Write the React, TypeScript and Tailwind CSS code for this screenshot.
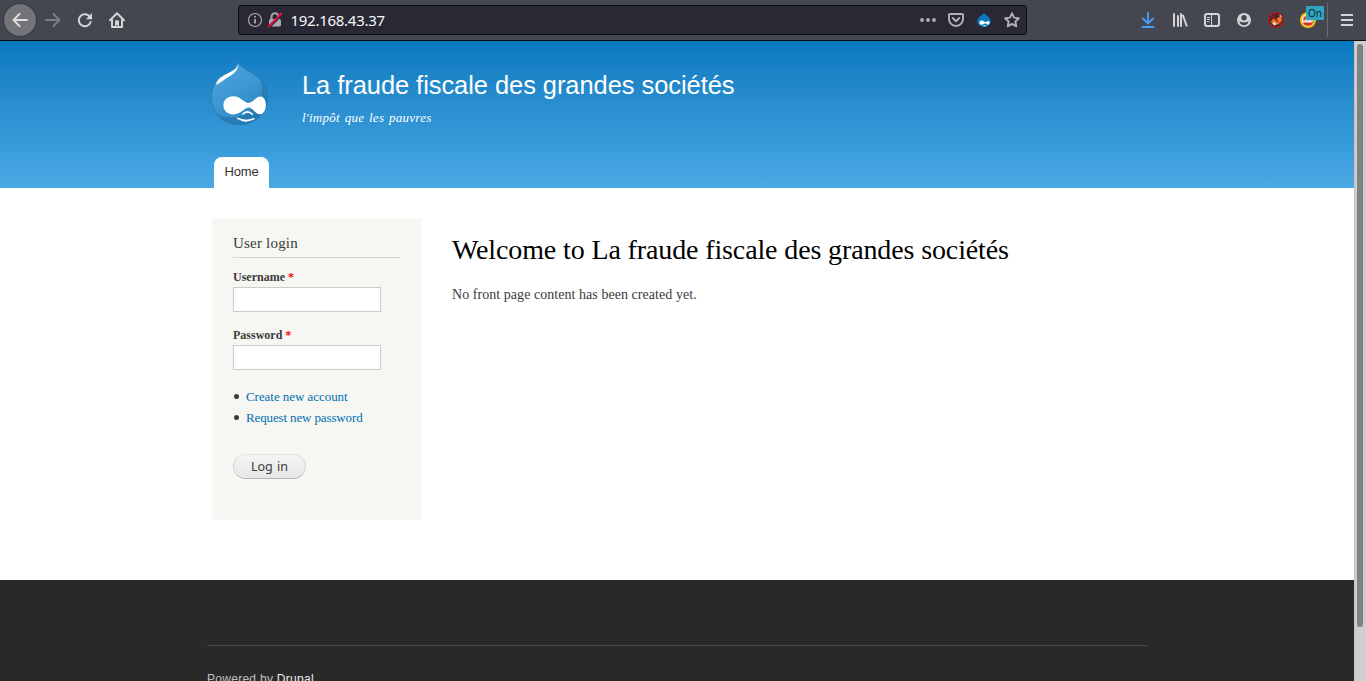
import React from 'react';

const Icon = ({ children, className = 'h-4 w-4' }: { children: React.ReactNode; className?: string }) => (
  <svg viewBox="0 0 16 16" className={`shrink-0 ${className}`} fill="none">{children}</svg>
);

const line = '#d3d4d3';

function Toolbar() {
  return (
    <header className="flex h-[41px] shrink-0 items-center border-b border-[#0c0c0d] bg-[#44474f] pl-1 pr-[11px] font-['Noto_Sans',sans-serif]">
      <button className="flex h-8 w-8 items-center justify-center rounded-full bg-[#737478] ring-1 ring-[#37393f]">
        <Icon><path d="M15 8H1.5M7.5 2 1.5 8l6 6" stroke="#dededd" strokeWidth="2" strokeLinecap="round" strokeLinejoin="round" /></Icon>
      </button>
      <button className="ml-[9px]">
        <Icon><path d="M1 8h13.5M8.5 2l6 6-6 6" stroke="#7b7d81" strokeWidth="2" strokeLinecap="round" strokeLinejoin="round" /></Icon>
      </button>
      <button className="ml-4">
        <Icon>
          <path d="M13 5.2A6 6 0 1 0 13.6 10" stroke={line} strokeWidth="2" strokeLinecap="round" />
          <path d="M15 1v6.3H8.8z" fill={line} />
        </Icon>
      </button>
      <button className="ml-4">
        <Icon>
          <path d="M1 8.2 8 1.3l7 6.9M3 7.5V15h10V7.5" stroke={line} strokeWidth="2" strokeLinecap="round" strokeLinejoin="round" />
          <path d="M6 15V9.5C6 8.7 6.500 8.300 7.200 8.300h1.600c.7 0 1.200.4 1.200 1.200V15H8.800v-2H7.200v2z" fill={line} />
        </Icon>
      </button>
      <div className="ml-[113px] flex h-[30px] w-[789px] items-center rounded-[3px] border border-[#0d0d12] bg-[#282935] pl-2 pr-[6px]">
        <Icon>
          <circle cx="8" cy="8" r="6.500" stroke="#a9a9ad" strokeWidth="1.200" />
          <path d="M8 7v4.500" stroke="#a9a9ad" strokeWidth="1.800" />
          <circle cx="8" cy="4.700" r="1" fill="#a9a9ad" />
        </Icon>
        <Icon className="ml-1 h-4 w-4">
          <path d="M4.500 8V4.800a3.500 3.500 0 0 1 7 0V8" stroke="#a9a9ad" strokeWidth="2" />
          <rect x="2" y="7" width="12" height="7.500" rx="1.500" fill="#a9a9ad" />
          <path d="M2 15.500 15.500 2" stroke="#282935" strokeWidth="2.200" />
          <path d="M1.500 14.500 14.500 1.500" stroke="#f20a3c" strokeWidth="1.800" strokeLinecap="round" />
        </Icon>
        <span className="ml-[7.500px] text-[15px] leading-5 tracking-[-0.270px] text-[#f9f9fa]">192.168.43.37</span>
        <div className="ml-auto flex gap-3">
          <Icon>
            <circle cx="2" cy="8" r="1.900" fill="#b1b1b5" /><circle cx="8" cy="8" r="1.900" fill="#b1b1b5" /><circle cx="14" cy="8" r="1.900" fill="#b1b1b5" />
          </Icon>
          <Icon>
            <path d="M1.800 2h12.400c.5 0 .8.300.8.800V7a7 7 0 0 1-14 0V2.800c0-.5.300-.8.800-.8z" stroke="#b1b1b5" strokeWidth="1.900" />
            <path d="M4.700 6 8 9.200 11.300 6" stroke="#b1b1b5" strokeWidth="1.900" strokeLinecap="round" strokeLinejoin="round" />
          </Icon>
          <Icon>
            <path d="M8 .8C9 3 14.700 5 14.700 9.300c0 3.300-3 5.700-6.700 5.700s-6.700-2.400-6.700-5.700C1.300 5 7 3 8 .8z" fill="#0877c0" />
            <path d="M5.500 8.600c1.700-.2 2.800 1.500 3.900 1.500 1 0 2.300-1.500 3.500-1 1.400.8.600 3.600-.8 3.600-1.200 0-1.800-1.400-2.800-1.400-1.200 0-2 1.700-4 1.500-2.700-.3-2.400-4 .2-4.200z" fill="#fff" />
            <path d="M7.200 13.700q1.600.7 3.200-.2" stroke="#fff" strokeWidth="0.900" />
          </Icon>
          <Icon>
            <path d="m8 1.200 2.050 4.400 4.850.6-3.550 3.300.9 4.800L8 11.950 3.750 14.300l.9-4.800L1.100 6.200l4.850-.6z" stroke="#b1b1b5" strokeWidth="1.900" strokeLinejoin="round" />
          </Icon>
        </div>
      </div>
      <div className="ml-auto flex items-center gap-4">
        <Icon><path d="M8 1v10M3 6.500l5 5 5-5M2.500 15h11" stroke="#459df5" strokeWidth="1.900" strokeLinecap="round" strokeLinejoin="round" /></Icon>
        <Icon><path d="M2 1.300v13.400M6 3.300v11.400M9 1.300v13.400M10.700 2.800l4.200 11.700" stroke={line} strokeWidth="2" /></Icon>
        <Icon>
          <rect x="1" y="2" width="14" height="12" rx="2" stroke={line} strokeWidth="2" />
          <path d="M7.500 2v12M3 5.500h3M3 7.500h3M3 9.500h2" stroke={line} strokeWidth="1" />
        </Icon>
        <Icon>
          <circle cx="8" cy="8" r="7" fill={line} />
          <circle cx="8" cy="5.700" r="2.700" fill="#44474f" />
          <path d="M3.400 9c.5 2.900 2.100 4.200 4.600 4.200s4.100-1.300 4.600-4.200c-1.400 1-3 1.400-4.600 1.400S4.800 10 3.400 9z" fill="#44474f" />
        </Icon>
        <Icon>
          <circle cx="8" cy="8" r="7" fill="#4a2a2c" />
          <path d="M2.500 10 5.500 6.500 8 8l1.500-2L13 3.500l.8 5-2 3L8 13z" fill="#e07b22" />
          <path d="m4 11.500 2.500-1.500 2 2-2 1.500zM9 10l2.500-.5.500 1.500-2 1z" fill="#eee3d4" />
          <path d="m11 3.300 2.500-.3.500 2.500z" fill="#eee3d4" />
          <circle cx="8" cy="8" r="7.300" stroke="#c80b12" strokeWidth="1.200" />
          <path d="m3 3 10 10" stroke="#c80b12" strokeWidth="1.200" />
        </Icon>
        <div className="relative h-4 w-4">
          <Icon>
            <circle cx="8" cy="8" r="7" fill="#eef5df" stroke="#f4c718" strokeWidth="2" />
            <path d="M4 4.500h8v4H3z" fill="#db3d42" />
            <path d="M2.800 10.500h10.400c-1 2.300-2.700 3.200-5 3.200s-4.400-.9-5.400-3.200z" fill="#e32735" />
            <path d="m5.500 8.500 2-2 3 2.500" stroke="#fff" strokeWidth="1.300" />
            <path d="m13 6 1.500 4.500-2 .5z" fill="#64ab3c" />
          </Icon>
          <span className="absolute -top-[6px] left-[6px] flex h-[14px] w-[18px] items-center justify-center rounded-[1px] bg-[#30a5bf] text-[10px] leading-none text-[#0c2935]">On</span>
        </div>
      </div>
      <div className="ml-[11px] mr-[11px] h-[34px] w-px bg-[#6b6d73]" />
      <Icon><path d="M2 3h12M2 8h12M2 13h12" stroke={line} strokeWidth="2" /></Icon>
    </header>
  );
}

function Druplicon() {
  return (
    <svg viewBox="0 0 64 73" className="h-[73px] w-16 shrink-0">
      <defs>
        <linearGradient id="drop" x1="0.200" y1="0.100" x2="0.800" y2="1">
          <stop offset="0" stopColor="#4ba0d8" /><stop offset="0.450" stopColor="#3b97d3" /><stop offset="1" stopColor="#2a82bb" />
        </linearGradient>
        <linearGradient id="shine" x1="0.800" y1="0" x2="0.200" y2="1">
          <stop offset="0" stopColor="#fff" stopOpacity="0.700" /><stop offset="0.400" stopColor="#fff" /><stop offset="1" stopColor="#fff" stopOpacity="0.900" />
        </linearGradient>
      </defs>
      <path d="M31 2.300C32.500 7.500 38 10 44 13.500c9.500 5.200 16.700 12.500 16.700 24.500 0 16-12.500 27.700-28.200 27.700S4.400 54 4.400 38c0-10.500 5.600-18 14.100-22.500C25 12 30 9.500 31 2.300z" fill="url(#drop)" stroke="#2b76a4" strokeWidth="0.700" />
      <path d="M53 20.500c5 4.500 7.600 10.500 7.600 17.500 0 16-12.400 27.500-28.100 27.500-10 0-18-4-23.500-11.500 11 7 25 6 35-3C54 42 58 34 53 20.500z" fill="#1c6ea4" opacity="0.500" />
      <path d="M30.800 4.500C31.500 9.500 30 13 23 17S13 24.500 9.200 25.800C8.500 23 12.500 18 19 15.200 25.500 12 30 10 30.800 4.500z" fill="url(#shine)" />
      <path d="M26.500 37.200c7 0 11 6.800 15 6.800 3.700 0 7.500-6.400 12.300-6.400 7.400 1 6.200 17.700-.8 17.700-4.500 0-7.500-6.800-11.300-6.800-4.200 0-8 6.900-15.200 6.900-13.500 0-13.500-18.200 0-18.200z" fill="#fff" />
      <path d="M36 54.800q4.800-4.200 9.300.4" fill="none" stroke="#fff" strokeWidth="1.600" strokeLinecap="round" />
      <path d="M30.600 59.300q8 3.900 16.200.5" fill="none" stroke="#fff" strokeWidth="1.500" strokeLinecap="round" />
      <path d="M30.600 59.300q7 6.500 16.200.5-8.200 2.500-16.200-.5z" fill="#fff" />
    </svg>
  );
}

function Field({ label, type }: { label: string; type: string }) {
  return (
    <label className="block h-[58px] text-[12px] font-bold leading-[18px] text-[#3b3b3b]">
      <span className="block h-[19px]">{label} <span className="text-[#f00]">*</span></span>
      <input type={type} className="block h-[25px] w-[148px] border border-[#ccc] bg-white" />
    </label>
  );
}

export default function App() {
  return (
    <div className="flex h-[681px] w-[1366px] flex-col overflow-hidden bg-white">
      <Toolbar />
      <div className="flex min-h-0 flex-1">
        <main className="flex min-w-0 flex-1 flex-col font-['Liberation_Serif',serif]">
          <div className="flex h-[147px] shrink-0 flex-col justify-between bg-linear-to-b from-[#0779bf] to-[#48a9e4] pl-[207px]">
            <div className="flex pt-[18px]">
              <Druplicon />
              <div className="ml-[31px] pt-2 text-white">
                <h1 className="font-['Liberation_Sans',sans-serif] text-[25.490px] leading-[37px] tracking-[-0.065px]">La fraude fiscale des grandes sociétés</h1>
                <p className="mt-[5px] text-[13px] italic leading-[18px] tracking-[0.260px] [word-spacing:1.300px]">l'impôt que les pauvres</p>
              </div>
            </div>
            <nav className="flex pl-[7px]">
              <a className="h-[31px] w-[55px] rounded-t-[8px] bg-white text-center font-['Liberation_Sans',sans-serif] text-[13px] leading-[29px] tracking-[-0.200px] text-[#333]">Home</a>
            </nav>
          </div>

          <div className="flex h-[392px] shrink-0 items-start pl-[212px] pt-[30px]">
            <aside className="h-[302px] w-[210px] border border-[#f9f9f9] bg-[#f6f6f2] px-5 pt-[15px]">
              <h2 className="h-[24px] border-b border-[#d6d6d6] text-[15px] leading-[19px] tracking-[0.200px] text-[#3b3b3b]">User login</h2>
              <form className="pt-[10px]" onSubmit={(e) => e.preventDefault()}>
                <Field label="Username" type="text" />
                <Field label="Password" type="password" />
                <ul className="pt-[2px] text-[13px] leading-[21px] text-[#0071b3]">
                  <li className="flex items-center tracking-[-0.050px]"><span className="ml-[1px] mr-[7px] h-[5px] w-[5px] rounded-full bg-[#3b3b3b]" />Create new account</li>
                  <li className="flex items-center tracking-[-0.130px]"><span className="ml-[1px] mr-[7px] h-[5px] w-[5px] rounded-full bg-[#3b3b3b]" />Request new password</li>
                </ul>
                <button className="mt-[26px] block h-[25px] w-[73px] rounded-full border border-[#e4e4e4] border-b-[#b4b4b4] border-l-[#d2d2d2] border-r-[#d2d2d2] bg-linear-to-b from-[#f3f3f3] to-[#e8e8e8] font-['Noto_Sans',sans-serif] text-[12.500px] leading-[22px] text-[#3a3a3a] [word-spacing:1px]">Log in</button>
              </form>
            </aside>
            <section className="pl-[30px] pt-[14px]">
              <h1 className="text-[28px] leading-[36px] tracking-[-0.125px] text-black">Welcome to La fraude fiscale des grandes sociétés</h1>
              <p className="mt-[16px] text-[14px] leading-[21px] tracking-[0.050px] text-[#3b3b3b]">No front page content has been created yet.</p>
            </section>
          </div>

          <footer className="min-h-0 flex-1 overflow-hidden bg-[#292929] pl-[207px] pt-[65px]">
            <div className="w-[940px] border-t border-[#484848] pt-[24px] font-['Liberation_Sans',sans-serif] text-[12px] leading-[18px] tracking-[0.280px] text-[#c0c0c0]">
              Powered by <a className="text-[#ededed]">Drupal</a>
            </div>
          </footer>
        </main>
        <div className="w-3 shrink-0 border-l border-[#c7c2ba] bg-[#cecece] pl-[2px] pt-[3px]">
          <div className="h-[583px] w-[6px] rounded-full bg-[#7e8281]" />
        </div>
      </div>
    </div>
  );
}
